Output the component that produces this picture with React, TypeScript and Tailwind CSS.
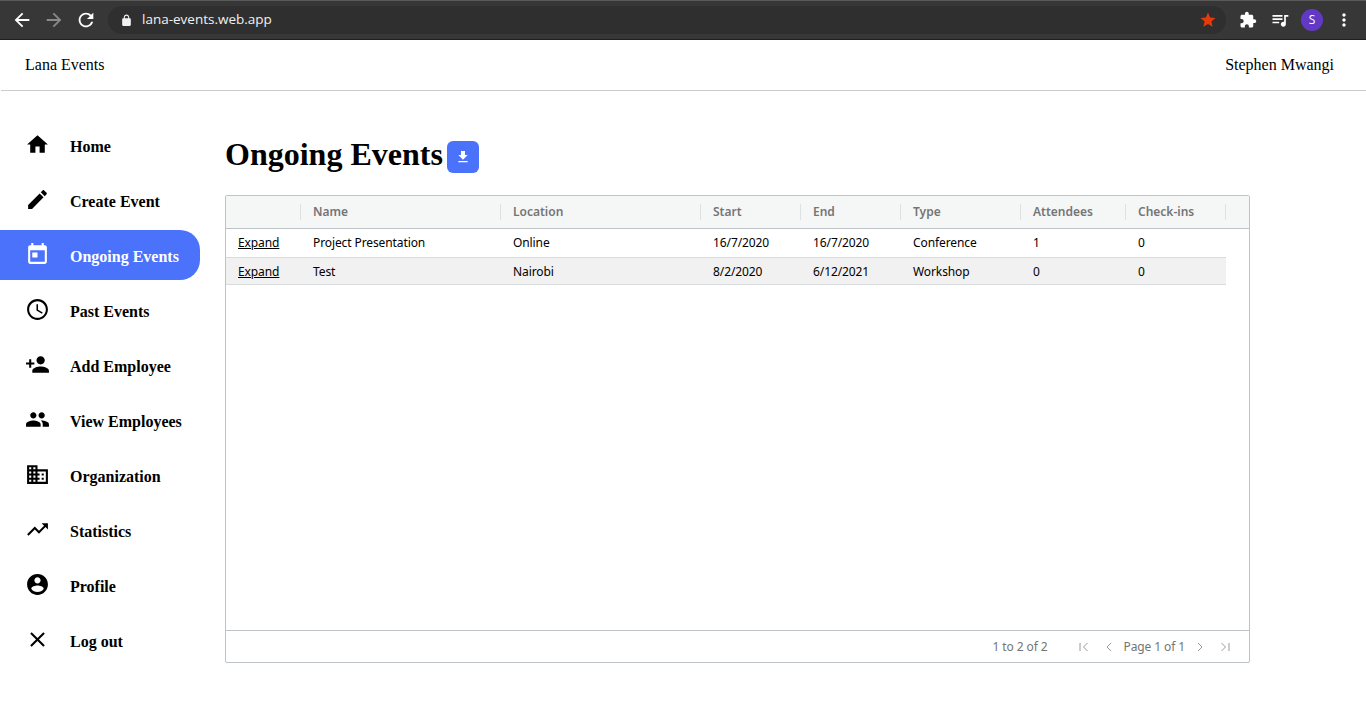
const ICONS = {
  home: "M10 20v-6h4v6h5v-8h3L12 3 2 12h3v8z",
  edit: "M3 17.25V21h3.75L17.81 9.94l-3.75-3.75L3 17.25zM20.71 7.04c.39-.39.39-1.02 0-1.41l-2.34-2.34c-.39-.39-1.02-.39-1.41 0l-1.83 1.83 3.75 3.75 1.83-1.83z",
  event: "M19 3h-1V1h-2v2H8V1H6v2H5c-1.11 0-1.99.9-1.99 2L3 19c0 1.1.89 2 2 2h14c1.1 0 2-.9 2-2V5c0-1.1-.9-2-2-2zm0 16H5V8h14v11zM7 10h5v5H7z",
  schedule: "M11.99 2C6.47 2 2 6.48 2 12s4.47 10 9.99 10C17.52 22 22 17.52 22 12S17.52 2 11.99 2zM12 20c-4.42 0-8-3.58-8-8s3.58-8 8-8 8 3.58 8 8-3.58 8-8 8zm.5-13H11v6l5.25 3.15.75-1.23-4.5-2.67z",
  personAdd: "M15 12c2.21 0 4-1.79 4-4s-1.79-4-4-4-4 1.79-4 4 1.79 4 4 4zm-9-2V7H4v3H1v2h3v3h2v-3h3v-2H6zm9 4c-2.67 0-8 1.34-8 4v2h16v-2c0-2.66-5.33-4-8-4z",
  people: "M16 11c1.66 0 2.99-1.34 2.99-3S17.66 5 16 5c-1.66 0-3 1.34-3 3s1.34 3 3 3zm-8 0c1.66 0 2.99-1.34 2.99-3S9.66 5 8 5C6.34 5 5 6.34 5 8s1.34 3 3 3zm0 2c-2.33 0-7 1.17-7 3.5V19h14v-2.5c0-2.33-4.67-3.5-7-3.5zm8 0c-.29 0-.62.02-.97.05 1.16.84 1.97 1.97 1.97 3.45V19h6v-2.5c0-2.33-4.67-3.5-7-3.5z",
  domain: "M12 7V3H2v18h20V7H12zM6 19H4v-2h2v2zm0-4H4v-2h2v2zm0-4H4V9h2v2zm0-4H4V5h2v2zm4 12H8v-2h2v2zm0-4H8v-2h2v2zm0-4H8V9h2v2zm0-4H8V5h2v2zm10 12h-8v-2h2v-2h-2v-2h2v-2h-2V9h8v10zm-2-8h-2v2h2v-2zm0 4h-2v2h2v-2z",
  trending: "M16 6l2.29 2.29-4.88 4.88-4-4L2 16.59 3.41 18l6-6 4 4 6.3-6.29L22 12V6z",
  account: "M12 2C6.48 2 2 6.48 2 12s4.48 10 10 10 10-4.48 10-10S17.52 2 12 2zm0 3c1.66 0 3 1.34 3 3s-1.34 3-3 3-3-1.34-3-3 1.34-3 3-3zm0 14.2c-2.5 0-4.71-1.28-6-3.22.03-1.99 4-3.08 6-3.08 1.99 0 5.97 1.09 6 3.08-1.29 1.94-3.5 3.22-6 3.22z",
  close: "M19 6.41L17.59 5 12 10.59 6.41 5 5 6.41 10.59 12 5 17.59 6.41 19 12 13.41 17.59 19 19 17.59 13.41 12z",
  download: "M19 9h-4V3H9v6H5l7 7 7-7zM5 18v2h14v-2H5z",
  back: "M20 11H7.83l5.59-5.59L12 4l-8 8 8 8 1.41-1.41L7.83 13H20v-2z",
  forward: "M12 4l-1.41 1.41L16.17 11H4v2h12.17l-5.58 5.59L12 20l8-8z",
  refresh: "M17.65 6.35C16.2 4.9 14.21 4 12 4c-4.42 0-7.99 3.58-7.99 8s3.57 8 7.99 8c3.73 0 6.84-2.55 7.73-6h-2.08c-.82 2.33-3.04 4-5.65 4-3.31 0-6-2.69-6-6s2.69-6 6-6c1.66 0 3.14.69 4.22 1.78L13 11h7V4l-2.35 2.35z",
  lock: "M18 8h-1V6c0-2.76-2.24-5-5-5S7 3.24 7 6v2H6c-1.1 0-2 .9-2 2v10c0 1.1.9 2 2 2h12c1.1 0 2-.9 2-2V10c0-1.1-.9-2-2-2zM9 6c0-1.66 1.34-3 3-3s3 1.34 3 3v2H9V6z",
  star: "M12 17.27L18.18 21l-1.64-7.03L22 9.24l-7.19-.61L12 2 9.19 8.63 2 9.24l5.46 4.73L5.82 21z",
  extension: "M20.5 11H19V7c0-1.1-.9-2-2-2h-4V3.5C13 2.12 11.88 1 10.5 1S8 2.12 8 3.5V5H4c-1.1 0-1.99.9-1.99 2v3.8H3.5c1.49 0 2.7 1.21 2.7 2.7s-1.21 2.7-2.7 2.7H2V20c0 1.1.9 2 2 2h3.8v-1.5c0-1.49 1.21-2.7 2.7-2.7 1.49 0 2.7 1.21 2.7 2.7V22H17c1.1 0 2-.9 2-2v-4h1.5c1.38 0 2.5-1.12 2.5-2.5S21.88 11 20.5 11z",
  queue: "M15 6H3v2h12V6zm0 4H3v2h12v-2zM3 16h8v-2H3v2zM17 6v8.18c-.31-.11-.65-.18-1-.18-1.66 0-3 1.34-3 3s1.34 3 3 3 3-1.34 3-3V8h3V6h-5z",
  more: "M12 8c1.1 0 2-.9 2-2s-.9-2-2-2-2 .9-2 2 .9 2 2 2zm0 2c-1.1 0-2 .9-2 2s.9 2 2 2 2-.9 2-2-.9-2-2-2zm0 6c-1.1 0-2 .9-2 2s.9 2 2 2 2-.9 2-2-.9-2-2-2z",
};

function Icon({ d, className }: { d: string; className: string }) {
  return (
    <svg viewBox="0 0 24 24" fill="currentColor" className={className}>
      <path d={d} />
    </svg>
  );
}

const NAV = [
  { label: "Home", icon: ICONS.home },
  { label: "Create Event", icon: ICONS.edit },
  { label: "Ongoing Events", icon: ICONS.event, active: true },
  { label: "Past Events", icon: ICONS.schedule },
  { label: "Add Employee", icon: ICONS.personAdd },
  { label: "View Employees", icon: ICONS.people },
  { label: "Organization", icon: ICONS.domain },
  { label: "Statistics", icon: ICONS.trending },
  { label: "Profile", icon: ICONS.account },
  { label: "Log out", icon: ICONS.close },
];

const COLS = ["", "Name", "Location", "Start", "End", "Type", "Attendees", "Check-ins"];
const ROWS = [
  ["Project Presentation", "Online", "16/7/2020", "16/7/2020", "Conference", "1", "0"],
  ["Test", "Nairobi", "8/2/2020", "6/12/2021", "Workshop", "0", "0"],
];
const GRID = "grid grid-cols-[75px_200px_200px_100px_100px_120px_105px_100px]";

function BrowserBar() {
  return (
    <div className="h-10 bg-[#373737] border-t border-t-[#5a5a5a] border-b border-b-[#1f1f1f] flex items-center font-['Open_Sans',sans-serif] text-white">
      <div className="flex items-center gap-[10px] pl-[11px]">
        <Icon d={ICONS.back} className="w-[22px] h-[22px]" />
        <Icon d={ICONS.forward} className="w-[22px] h-[22px] text-[#8a8a8a]" />
        <Icon d={ICONS.refresh} className="w-[22px] h-[22px]" />
      </div>
      <div className="ml-[11px] w-[1118px] h-7 rounded-full bg-[#2f2f2f] flex items-center">
        <Icon d={ICONS.lock} className="ml-3 w-[13px] h-[13px] text-[#f1f1f1]" />
        <span className="ml-[9px] text-[13.5px] text-[#f1f1f1] leading-none">lana-events.web.app</span>
        <Icon d={ICONS.star} className="ml-auto mr-[9px] w-[18px] h-[18px] text-[#e63a0d]" />
      </div>
      <Icon d={ICONS.extension} className="ml-[13px] w-[18px] h-[18px]" />
      <Icon d={ICONS.queue} className="ml-[13px] w-5 h-5" />
      <div className="ml-[11px] w-[22px] h-[22px] rounded-full bg-[#6239c4] flex items-center justify-center text-[12px] leading-none">S</div>
      <Icon d={ICONS.more} className="ml-[11px] w-5 h-5" />
    </div>
  );
}

function Sidebar() {
  return (
    <nav className="w-[200px] shrink-0 pt-[29px] flex flex-col gap-[5px]">
      {NAV.map((item) => (
        <div
          key={item.label}
          className={
            item.active
              ? "h-[50px] flex items-center pl-[25px] rounded-r-[20px] bg-[#4a72fb] text-white"
              : "h-[50px] flex items-center pl-[25px] text-black"
          }
        >
          <Icon d={item.icon} className="w-[25px] h-[25px] shrink-0 -mt-[1px]" />
          <span className="ml-5 pt-1 text-[16px] font-bold">{item.label}</span>
        </div>
      ))}
    </nav>
  );
}

function EventsTable() {
  return (
    <div className="w-[1025px] h-[468px] border border-[#bdc3c7] rounded-[2px] flex flex-col font-['Noto_Sans',sans-serif] text-[12px]">
      <div className="h-[33px] shrink-0 bg-[#f5f7f7] border-b border-[#bdc3c7] flex items-center">
        <div className={GRID}>
          {COLS.map((col) => (
            <div key={col} className="h-[16px] flex items-center px-3 border-r border-[#dde1e2] font-semibold text-[#757575] leading-none">
              {col}
            </div>
          ))}
        </div>
      </div>
      <div className="flex-1 w-[1000px] text-black tracking-[-0.1px]">
        {ROWS.map((row, i) => (
          <div
            key={row[0]}
            className={
              i % 2 === 1
                ? GRID + " h-[27px] pt-[2px] items-center bg-[#f1f1f1] border-b border-[#d9dcde]"
                : GRID + " h-[29px] items-center bg-white border-b border-[#d9dcde]"
            }
          >
            <div className="px-3 underline">Expand</div>
            {row.map((cell, j) => (
              <div key={j} className="px-3">{cell}</div>
            ))}
          </div>
        ))}
      </div>
      <div className="h-[32px] shrink-0 border-t border-[#bdc3c7] flex items-center justify-end pr-[18px] text-[#757575] tracking-[-0.1px]">
        <span>1 to 2 of 2</span>
        <span className="ml-[31px] flex items-center text-[#9a9a9a]">
          <svg viewBox="0 0 12 12" fill="none" stroke="currentColor" className="w-3 h-3"><path d="M2 2v8M9.5 2l-4 4 4 4" /></svg>
          <svg viewBox="0 0 12 12" fill="none" stroke="currentColor" className="ml-[13px] w-3 h-3"><path d="M8 2L4 6l4 4" /></svg>
        </span>
        <span className="ml-2 mr-[9px]">Page 1 of 1</span>
        <span className="flex items-center text-[#9a9a9a]">
          <svg viewBox="0 0 12 12" fill="none" stroke="currentColor" className="w-3 h-3"><path d="M4 2l4 4-4 4" /></svg>
          <svg viewBox="0 0 12 12" fill="none" stroke="currentColor" className="ml-[13px] w-3 h-3"><path d="M2.5 2l4 4-4 4M10 2v8" /></svg>
        </span>
      </div>
    </div>
  );
}

export default function App() {
  return (
    <div className="h-[709px] overflow-hidden bg-white font-['Liberation_Serif',serif]">
      <BrowserBar />
      <header className="h-[51px] ml-[1px] border-b border-[#cccccc] flex items-center justify-between pl-[24px] pr-[32px] text-[16px] text-black">
        <span>Lana Events</span>
        <span>Stephen Mwangi</span>
      </header>
      <div className="flex">
        <Sidebar />
        <main className="ml-[25px] pt-[42px]">
          <div className="flex items-center h-[47px] mb-[15px]">
            <h1 className="pb-[6px] text-[32px] font-bold text-black leading-none">Ongoing Events</h1>
            <button className="ml-[4px] w-8 h-8 rounded-[6px] bg-[#4a72fb] text-white flex items-center justify-center">
              <Icon d={ICONS.download} className="w-4 h-4" />
            </button>
          </div>
          <EventsTable />
        </main>
      </div>
    </div>
  );
}
